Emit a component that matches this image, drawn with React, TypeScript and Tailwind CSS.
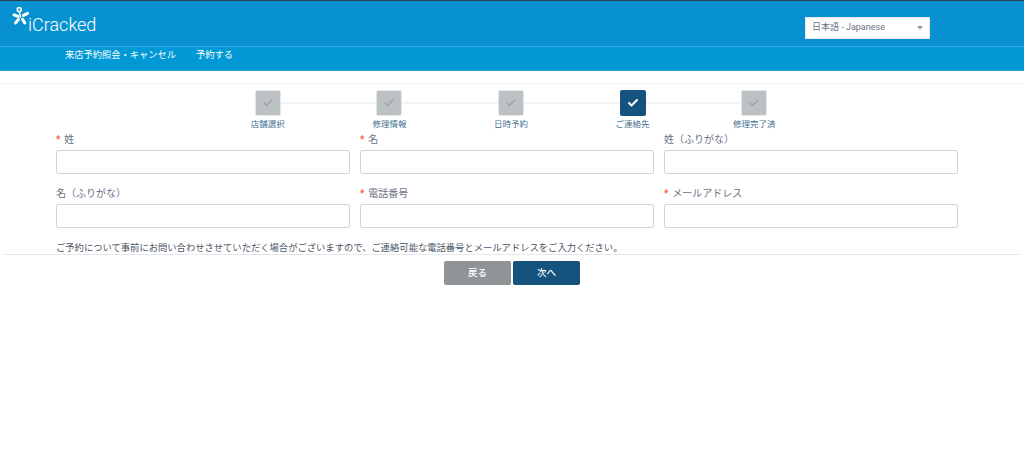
import { Check } from 'lucide-react';

const steps = [
  { label: '店舗選択' },
  { label: '修理情報' },
  { label: '日時予約' },
  { label: 'ご連絡先', active: true },
  { label: '修理完了済' },
];

const rows = [
  [
    { label: '姓', required: true },
    { label: '名', required: true },
    { label: '姓（ふりがな）' },
  ],
  [
    { label: '名（ふりがな）' },
    { label: '電話番号', required: true },
    { label: 'メールアドレス', required: true },
  ],
];

function Logo() {
  return (
    <div className="flex items-start">
      <svg viewBox="14 7 19 20" className="size-5">
        <g stroke="white" strokeLinecap="round" fill="none">
          <circle cx="20.7" cy="9.6" r="2" strokeWidth="1.6" />
          <path d="M21 12l1 5" strokeWidth="1.6" />
          <path d="M15.5 14.8l4 1.6" strokeWidth="3" />
          <path d="M17 23l3-3.6" strokeWidth="3" />
          <path d="M26.3 23l-2.2-3.6" strokeWidth="3" />
          <path d="M29 13.4l-4 2" strokeWidth="3" />
        </g>
      </svg>
      <span className="-ml-1 mt-1.5 text-lg leading-6 font-light text-white">iCracked</span>
    </div>
  );
}

function Step({ label, active }: { label: string; active?: boolean }) {
  return (
    <div className="relative flex flex-col items-center">
      <div
        className={
          active
            ? 'flex size-6.5 items-center justify-center rounded-xs bg-[#15527e] text-white'
            : 'flex size-6.5 items-center justify-center rounded-xs border border-gray-200 bg-[#bcc1c4] text-gray-400'
        }
      >
        <Check size={12} strokeWidth={active ? 4 : 2.5} />
      </div>
      <span className="mt-0.5 text-[8.5px] leading-3 text-[#3f6f90]">{label}</span>
    </div>
  );
}

function Field({ label, required }: { label: string; required?: boolean }) {
  return (
    <div className="flex flex-col">
      <label className="h-4 text-[10px] leading-4 text-gray-500">
        {required && <span className="mr-1 text-orange-600">*</span>}
        {label}
      </label>
      <input className="mt-0.5 h-6 w-full rounded-xs border border-gray-300 bg-white" />
    </div>
  );
}

export default function App() {
  return (
    <div
      className="min-h-[461px] bg-white"
      style={{ fontFamily: 'Roboto, "Noto Sans CJK JP", sans-serif' }}
    >
      <header className="border-t border-[#2d3e50]">
        <div className="flex h-11.5 items-start justify-between border-b border-[#3ba8dd] bg-[#0891d1] pt-1.5 pr-[94px] pl-3">
          <Logo />
          <div className="mt-2.5 flex h-5.5 w-[125px] items-center justify-between border border-gray-200 bg-white px-1.5 text-[9px] text-gray-500">
            <span>日本語 - Japanese</span>
            <span className="border-x-[3px] border-t-[4px] border-x-transparent border-t-gray-400" />
          </div>
        </div>
        <nav className="flex h-6 gap-5 border-b border-[#1ba6e0] bg-[#0099d6] pl-16 text-[9.25px] leading-4 text-white">
          <span className="pl-px">来店予約照会・キャンセル</span>
          <span>予約する</span>
        </nav>
      </header>

      <div className="mt-3 border-t border-gray-100 pt-1.5">
        <div className="pr-0.5">
          <div className="relative mx-auto grid w-[608px] grid-cols-5">
            <div className="absolute inset-x-[60px] top-3 h-0.5 bg-gray-100" />
            {steps.map((s) => (
              <Step key={s.label} label={s.label} active={s.active} />
            ))}
          </div>
        </div>

        <div className="flex flex-col gap-3 pt-0.5 pr-16.5 pl-14">
          {rows.map((row, i) => (
            <div key={i} className="grid grid-cols-3 gap-2.5">
              {row.map((f) => (
                <Field key={f.label} label={f.label} required={f.required} />
              ))}
            </div>
          ))}
        </div>

        <p className="mt-3.5 pl-14 text-[9.3px] leading-3 text-gray-600">
          ご予約について事前にお問い合わせさせていただく場合がございますので、ご連絡可能な電話番号とメールアドレスをご入力ください。
        </p>

        <div className="mx-1 flex justify-center gap-0.5 border-t border-gray-200 pt-1.5">
          <button className="h-6 w-[67px] rounded-xs bg-[#8f9496] text-[9.5px] font-medium text-white">
            戻る
          </button>
          <button className="h-6 w-[67px] rounded-xs bg-[#15527e] text-[9.5px] font-medium text-white">
            次へ
          </button>
        </div>
      </div>
    </div>
  );
}
